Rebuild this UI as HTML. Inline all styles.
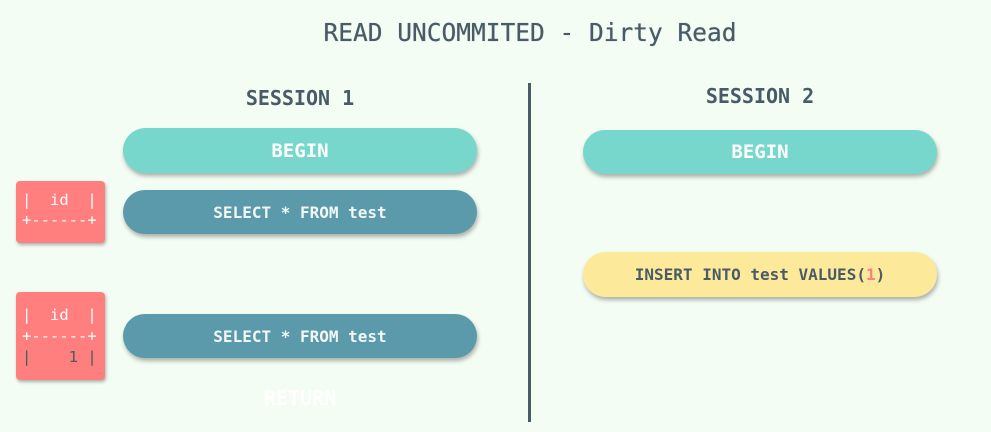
<!DOCTYPE html>
<html><head><meta charset="utf-8"><style>
body{margin:0;width:991px;height:432px;background:#f3fdf4;position:relative;overflow:hidden;font-family:"DejaVu Sans Mono","Liberation Mono",monospace;}
.a{position:absolute;}
.pill{position:absolute;border-radius:23px;display:flex;align-items:center;justify-content:center;box-shadow:1px 3px 4px rgba(0,0,0,0.3);font-weight:bold;}
.begin{background:#78d7cc;color:#fff;font-size:19px;}
.sel{background:#5a9aab;color:#f2f6f4;font-size:16px;}
.ins{background:#fde99a;color:#4a5b68;font-size:16px;}
.red{position:absolute;background:#ff7f7e;border-radius:4px;box-shadow:1px 2px 3px rgba(0,0,0,0.3);color:#fff;font-size:15.5px;white-space:pre;padding-left:6px;box-sizing:border-box;}
</style></head><body>
<div class="a" style="left:0;width:1060px;top:18px;text-align:center;font-size:24.5px;color:#4a5b68;text-shadow:0 0 0.6px #4a5b68;">READ UNCOMMITED - Dirty Read</div>
<div class="a" style="left:123px;width:354px;top:86px;text-align:center;font-size:20px;font-weight:bold;color:#4a5b68;">SESSION 1</div>
<div class="a" style="left:583px;width:354px;top:84px;text-align:center;font-size:20px;font-weight:bold;color:#4a5b68;">SESSION 2</div>
<div class="a" style="left:528px;top:83px;width:3px;height:339px;background:#4a5b68;"></div>
<div class="pill begin" style="left:123px;top:128px;width:354px;height:45px;">BEGIN</div>
<div class="pill begin" style="left:583px;top:130px;width:354px;height:44px;">BEGIN</div>
<div class="pill sel" style="left:123px;top:190px;width:354px;height:44px;">SELECT * FROM test</div>
<div class="pill sel" style="left:123px;top:314px;width:354px;height:44px;">SELECT * FROM test</div>
<div class="pill ins" style="left:583px;top:252px;width:354px;height:45px;">INSERT INTO test VALUES(<span style="color:#ff7f7e">1</span>)</div>
<div class="red" style="left:16px;top:181px;width:89px;height:62px;padding-top:9px;line-height:20px;">|  id  |
+------+</div>
<div class="red" style="left:16px;top:292px;width:89px;height:88px;padding-top:13px;line-height:21px;">|  id  |
+------+
<span style="color:#4a5b68">|    1 |</span></div>
<div class="a" style="left:123px;width:354px;top:386px;text-align:center;font-size:20px;color:#fff;font-weight:bold;">RETURN</div>
</body></html>
